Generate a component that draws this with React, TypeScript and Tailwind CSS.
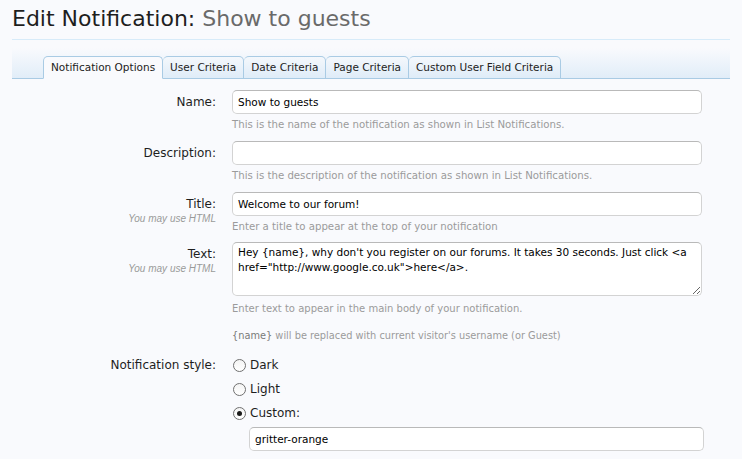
import React from "react";

const font = { fontFamily: '"DejaVu Sans", Verdana, sans-serif' };

function Row({
  label,
  sub,
  children,
  className = "",
}: {
  label: string;
  sub?: string;
  children: React.ReactNode;
  className?: string;
}) {
  return (
    <div className={"flex " + className}>
      <div className="w-[204px] shrink-0 text-right pt-[3px]">
        <div className="text-[12px] leading-[18px] text-[#1e1e1e]">{label}</div>
        {sub && (
          <div className="font-['Liberation_Sans',Arial,sans-serif] text-[10px] leading-[12px] italic text-[#9a9a9a]">
            {sub}
          </div>
        )}
      </div>
      <div className="ml-4 w-[470px]">{children}</div>
    </div>
  );
}

function TextInput({ value }: { value: string }) {
  return (
    <div className="h-6 w-full rounded-[5px] border border-[#d3d3d3] border-t-[#b9b9b9] bg-white px-[5px] text-[10.5px] leading-[22px] text-black">
      {value}
    </div>
  );
}

function Hint({ children, className = "" }: { children: React.ReactNode; className?: string }) {
  return <div className={"leading-[14px] text-[#9b9b9b] " + className}>{children}</div>;
}

function Radio({ label, checked }: { label: string; checked?: boolean }) {
  return (
    <div className="flex h-6 items-center">
      <span className="ml-[1px] flex h-[13px] w-[13px] items-center justify-center rounded-full border border-[#707070] bg-gradient-to-b from-[#f4f4f4] to-white">
        {checked && <span className="h-[5px] w-[5px] rounded-full bg-[#1a1a1a]" />}
      </span>
      <span className="ml-[4px] text-[12px] text-[#1e1e1e]">{label}</span>
    </div>
  );
}

const tabs = [
  "Notification Options",
  "User Criteria",
  "Date Criteria",
  "Page Criteria",
  "Custom User Field Criteria",
];

export default function App() {
  return (
    <div style={font} className="min-h-[459px] bg-[#f9fafd] px-3 pt-[4px]">
      <h1 className="border-b border-[#d7ebf9] pb-[5px] text-[22px] leading-[30px] text-[#1e1e1e]">
        Edit Notification: <span className="text-[#6a6a6a]">Show to guests</span>
      </h1>
      <div className="mt-[8px] flex h-[31px] items-end border-b border-[#a9cbe4] bg-gradient-to-b from-[#f9fafd] to-[#e1edf8] pl-[31px]">
        {tabs.map((t, i) => (
          <div
            key={t}
            className={
              "mb-[-1px] flex h-[23px] items-center rounded-t-[5px] border border-[#a9cbe4] px-[7px] text-[10.5px] text-[#222] " +
              (i === 0
                ? "border-b-[#f9fafd] bg-[#f9fafd]"
                : "border-l-0 bg-gradient-to-b from-[#f4f8fc] to-[#dfecf8]")
            }
          >
            {t}
          </div>
        ))}
      </div>

      <div className="pt-[11px]">
        <Row label="Name:" className="mb-[9px]">
          <TextInput value="Show to guests" />
          <Hint className="mt-[4px] text-[10.2px]">This is the name of the notification as shown in List Notifications.</Hint>
        </Row>
        <Row label="Description:" className="mb-[9px]">
          <TextInput value="" />
          <Hint className="mt-[4px] text-[10.2px]">This is the description of the notification as shown in List Notifications.</Hint>
        </Row>
        <Row label="Title:" sub="You may use HTML" className="mb-[8px]">
          <TextInput value="Welcome to our forum!" />
          <Hint className="mt-[4px] text-[10.2px]">Enter a title to appear at the top of your notification</Hint>
        </Row>
        <Row label="Text:" sub="You may use HTML" className="mb-[10px]">
          <textarea
            readOnly
            defaultValue={`Hey {name}, why don't you register on our forums. It takes 30 seconds. Just click <a href="http://www.google.co.uk">here</a>.`}
            className="block h-[54px] w-full rounded-[5px] border border-[#d3d3d3] border-t-[#b9b9b9] bg-white px-[5px] py-[2px] text-[10.5px] leading-[15px] text-black outline-none"
          />
          <Hint className="mt-[6px] text-[10px]">Enter text to appear in the main body of your notification.</Hint>
          <Hint className="mt-[13px] text-[9.8px]">
            <span className="text-[#7a7a7a]">{"{name}"}</span> will be replaced with current visitor's username (or Guest)
          </Hint>
        </Row>
        <div className="flex">
          <div className="w-[204px] shrink-0 text-right text-[12px] leading-[24px] text-[#1e1e1e]">
            Notification style:
          </div>
          <div className="ml-4 w-[472px]">
            <Radio label="Dark" />
            <Radio label="Light" />
            <Radio label="Custom:" checked />
            <div className="mt-[2px] pl-[17px]">
              <TextInput value="gritter-orange" />
            </div>
          </div>
        </div>
      </div>
    </div>
  );
}
